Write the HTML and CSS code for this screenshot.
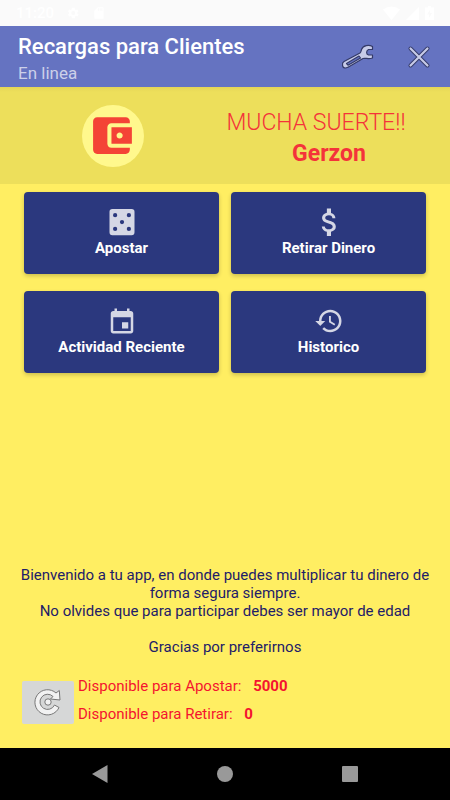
FILE: index.html
```html
<!DOCTYPE html>
<html lang="es">
<head>
    <meta charset="UTF-8">
    <meta name="viewport" content="width=device-width, initial-scale=1.0">
    <title>Recargas para Clientes</title>
    <link rel="stylesheet" href="styles.css">
</head>
<body>
    <div class="status-bar">
        <div class="status-group">
            <span class="status-time">11:20</span>
            <svg width="14" height="14" viewBox="0 0 24 24" fill="currentColor"><path fill-rule="evenodd" d="M19.4 13a7.500 7.500 0 0 0 0-2l2.100-1.600-2-3.500-2.500 1a7.300 7.300 0 0 0-1.700-1L15 3.200h-5l-.4 2.700a7.300 7.300 0 0 0-1.700 1l-2.500-1-2 3.500L5.600 11a7.500 7.500 0 0 0 0 2l-2.100 1.600 2 3.500 2.500-1a7.300 7.300 0 0 0 1.700 1l.4 2.700h5l.4-2.700a7.300 7.300 0 0 0 1.700-1l2.500 1 2-3.500zM12.500 15.500a3.500 3.500 0 1 1 0-7 3.500 3.500 0 0 1 0 7z"/></svg>
            <svg width="14" height="14" viewBox="0 0 24 24" fill="currentColor"><path d="M18 2h-8L4 8v12a2 2 0 0 0 2 2h12a2 2 0 0 0 2-2V4a2 2 0 0 0-2-2zm-6 6h-2V4h2zm3 0h-2V4h2zm3 0h-2V4h2z"/></svg>
        </div>
        <div class="status-group status-right">
            <svg width="17" height="14" viewBox="0 0 17 14" fill="currentColor"><path d="M0 3.500Q8.500-2.500 17 3.500L8.500 14z"/></svg>
            <svg width="13" height="14" viewBox="0 0 13 14" fill="currentColor"><path d="M0 14 13 1v13z"/></svg>
            <svg width="9" height="14" viewBox="0 0 9 14" fill="currentColor"><path fill-rule="evenodd" d="M3 0h3v1.500h3V14H0V1.500h3zM5 4 2 8.500h2V12l3-5H5z"/></svg>
        </div>
    </div>

    <header class="toolbar">
        <div class="toolbar-titles">
            <h1 class="toolbar-title">Recargas para Clientes</h1>
            <p class="toolbar-subtitle">En linea</p>
        </div>
        <button class="toolbar-btn" type="button" aria-label="Ajustes">
            <svg width="34" height="28" viewBox="0 0 34 28">
                <path fill="#c7cbe8" stroke="#343a68" stroke-width="1.200" stroke-linejoin="round" fill-rule="evenodd" d="M31.500 3.500C28 1.500 22 2 20.500 6.500c-.4 1.500-.4 2.800-1.500 3.500L3 18.500c-2.500 1.500-2 6.500 1.500 6.500 1 0 1.500-.3 2.500-.8l15-8.700c2.500-.7 5.500 1 9.500-.5v-3h-4c-2.500-1-2.500-4 0-5.500h4zM5.500 20.500 18 13l1.500 2L7 22.200z"/>
            </svg>
        </button>
        <button class="toolbar-btn" type="button" aria-label="Cerrar">
            <svg width="24" height="24" viewBox="0 0 24 24" fill="none" stroke-linecap="round">
                <path stroke="#343a68" stroke-width="4" d="M3.500 3.500l17 17M20.500 3.500l-17 17"/>
                <path stroke="#c7cbe8" stroke-width="2.200" d="M3.500 3.500l17 17M20.500 3.500l-17 17"/>
            </svg>
        </button>
    </header>

    <section class="hero">
        <div class="hero-logo">
            <svg width="49" height="49" viewBox="1 0 24 24" fill="currentColor"><path d="M21 18v1c0 1.100-.9 2-2 2H5c-1.110 0-2-.9-2-2V5c0-1.100.89-2 2-2h14c1.100 0 2 .9 2 2v1h-9c-1.110 0-2 .9-2 2v8c0 1.100.89 2 2 2h9zm-9-2h10V8H12v8zm4-2.500c-.83 0-1.500-.67-1.500-1.500s.67-1.500 1.500-1.500 1.500.67 1.500 1.500-.67 1.500-1.500 1.500z"/></svg>
        </div>
        <div class="hero-text">
            <p class="hero-greeting">MUCHA SUERTE!!</p>
            <p class="hero-name">Gerzon</p>
        </div>
    </section>

    <main class="content">
        <div class="menu-grid">
            <button class="menu-btn" type="button">
                <svg class="menu-icon" viewBox="0 0 24 24"><path fill-rule="evenodd" d="M4.300 1.500h15.400A2.300 2.300 0 0 1 22 3.800v16.400a2.300 2.300 0 0 1-2.300 2.300H4.300A2.300 2.300 0 0 1 2 20.200V3.800a2.300 2.300 0 0 1 2.300-2.300zM6.500 4.800a1.700 1.700 0 1 0 0 3.400 1.700 1.700 0 0 0 0-3.400zm11 0a1.700 1.700 0 1 0 0 3.400 1.700 1.700 0 0 0 0-3.400zM12 10.300a1.700 1.700 0 1 0 0 3.400 1.700 1.700 0 0 0 0-3.400zM6.500 15.800a1.700 1.700 0 1 0 0 3.400 1.700 1.700 0 0 0 0-3.400zm11 0a1.700 1.700 0 1 0 0 3.400 1.700 1.700 0 0 0 0-3.400z"/></svg>
                Apostar
            </button>
            <button class="menu-btn" type="button">
                <svg class="menu-icon" viewBox="0 0 24 24"><path transform="translate(-.7 -1) scale(1.100)" d="M11.800 10.900c-2.270-.59-3-1.200-3-2.150 0-1.090 1.010-1.850 2.700-1.850 1.780 0 2.440.85 2.500 2.100h2.210c-.07-1.720-1.120-3.300-3.210-3.810V2h-3v3.160c-1.940.42-3.500 1.680-3.500 3.610 0 2.310 1.910 3.460 4.700 4.130 2.500.6 3 1.480 3 2.410 0 .69-.49 1.790-2.700 1.790-2.060 0-2.870-.92-2.980-2.100h-2.200c.12 2.190 1.760 3.420 3.680 3.830V22h3v-3.150c1.950-.37 3.500-1.500 3.500-3.550 0-2.840-2.430-3.810-4.700-4.400z"/></svg>
                Retirar Dinero
            </button>
            <button class="menu-btn" type="button">
                <svg class="menu-icon" viewBox="0 -1 24 24"><path d="M17 12h-5v5h5v-5zM16 1v2H8V1H6v2H5c-1.110 0-1.990.9-1.990 2L3 19c0 1.100.89 2 2 2h14c1.100 0 2-.9 2-2V5c0-1.100-.9-2-2-2h-1V1h-2zm3 18H5V8h14v11z"/></svg>
                Actividad Reciente
            </button>
            <button class="menu-btn" type="button">
                <svg class="menu-icon" viewBox="0 0 24 24"><path d="M13 3c-4.970 0-9 4.030-9 9H1l3.890 3.890.07.14L9 12H6c0-3.870 3.130-7 7-7s7 3.130 7 7-3.130 7-7 7c-1.930 0-3.680-.79-4.940-2.060l-1.420 1.420C8.270 19.990 10.510 21 13 21c4.970 0 9-4.030 9-9s-4.030-9-9-9zm-1 5v5l4.280 2.540.72-1.210-3.500-2.080V8H12z"/></svg>
                Historico
            </button>
        </div>

        <div class="welcome">
            <p>Bienvenido a tu app, en donde puedes multiplicar tu dinero de forma segura siempre.</p>
            <p>No olvides que para participar debes ser mayor de edad</p>
            <p class="welcome-thanks">Gracias por preferirnos</p>
        </div>

        <div class="balance">
            <button class="refresh-btn" type="button" aria-label="Actualizar saldo">
                <svg width="30" height="30" viewBox="0 0 30 30" fill="#f2f2f2" stroke="#777" stroke-width="1" stroke-linejoin="round">
                    <path d="M23 6 26.300 3.500 27 13 17.500 12 20 9.500A7.600 7.600 0 1 0 21.500 18L26 20.500A12.600 12.600 0 1 1 23 6z"/>
                    <circle cx="15" cy="15" r="3.200"/>
                </svg>
            </button>
            <div class="balance-lines">
                <p>Disponible para Apostar: <strong class="balance-value">5000</strong></p>
                <p>Disponible para Retirar: <strong class="balance-value">0</strong></p>
            </div>
        </div>
    </main>

    <nav class="nav-bar">
        <button class="nav-btn" type="button" aria-label="Atrás">
            <svg width="18" height="18" viewBox="0 0 18 18"><path d="M16.500 0v18L1 9z"/></svg>
        </button>
        <button class="nav-btn" type="button" aria-label="Inicio">
            <svg width="18" height="18" viewBox="0 0 18 18"><circle cx="9" cy="9" r="8"/></svg>
        </button>
        <button class="nav-btn" type="button" aria-label="Recientes">
            <svg width="18" height="18" viewBox="0 0 18 18"><rect x="1" y="1" width="16" height="16" rx="1"/></svg>
        </button>
    </nav>
</body>
</html>
```

FILE: styles.css
```css
* {
    box-sizing: border-box;
}

body {
    display: flex;
    flex-direction: column;
    min-height: 100vh;
    margin: 0;
    background: #ffee62;
    font-family: Roboto, sans-serif;
    font-size: 15px;
    line-height: 18px;
}

h1,
p {
    margin: 0;
}

button {
    padding: 0;
    border: none;
    background: transparent;
    font-family: inherit;
    cursor: pointer;
}

svg {
    display: block;
}

/* Barra de estado */
.status-bar {
    display: flex;
    justify-content: space-between;
    align-items: center;
    height: 26px;
    padding: 0 16px;
    background: #fafafa;
    color: #fff;
}

.status-group {
    display: flex;
    align-items: center;
    gap: 12px;
}

.status-right {
    gap: 6px;
}

.status-time {
    font-weight: 500;
}

/* Cabecera */
.toolbar {
    display: flex;
    align-items: center;
    height: 61px;
    padding: 0 1px 0 18px;
    background: #6573c1;
}

.toolbar-titles {
    flex: 1;
    padding-top: 4px;
}

.toolbar-title {
    color: #fff;
    font-size: 22px;
    font-weight: 500;
    line-height: 28px;
}

.toolbar-subtitle {
    color: #ccd0e9;
    font-size: 17px;
    line-height: 24px;
}

.toolbar-btn {
    display: flex;
    align-items: center;
    justify-content: center;
    width: 61px;
    height: 61px;
}

.hero {
    display: grid;
    grid-template-columns: 1fr 1fr;
    align-items: center;
    height: 97px;
    padding: 0 18px 0 44px;
    background: linear-gradient(#e4d556, #eddf5b 5px);
    color: #f4333a;
}

.hero-logo {
    display: flex;
    align-items: center;
    justify-content: center;
    width: 62px;
    height: 62px;
    margin-left: 38px;
    border-radius: 50%;
    background: #fff88d;
    color: #f44336;
}

.hero-text {
    display: flex;
    flex-direction: column;
    align-items: center;
    margin-left: -38px;
    padding-top: 4px;
    font-size: 23px;
    line-height: 31px;
}

.hero-greeting {
    font-weight: 300;
}

.hero-name {
    padding-left: 26px;
    font-weight: 700;
}

.content {
    display: flex;
    flex: 1;
    flex-direction: column;
    padding-top: 8px;
}

/* Menu principal */
.menu-grid {
    display: grid;
    grid-template-columns: 1fr 1fr;
    gap: 17px 12px;
    padding: 0 24px;
}

.menu-btn {
    display: flex;
    flex-direction: column;
    align-items: center;
    justify-content: center;
    gap: 2px;
    height: 82px;
    padding-bottom: 2px;
    border-radius: 4px;
    background: #2b387e;
    box-shadow: 0 2px 4px rgba(0, 0, 0, 0.2);
    color: #fff;
    font-size: 15px;
    font-weight: 700;
    line-height: 18px;
}

.menu-icon {
    width: 32px;
    height: 30px;
    fill: #d5d7e5;
}

.welcome {
    margin-top: auto;
    padding: 0 12px;
    color: #1e2068;
    text-align: center;
}

.welcome-thanks {
    margin-top: 18px;
}

.balance {
    display: flex;
    align-items: center;
    gap: 4px;
    padding: 16px 22px 20px;
    color: #f4142f;
}

.refresh-btn {
    display: flex;
    align-items: center;
    justify-content: center;
    width: 52px;
    height: 43px;
    margin-top: 4px;
    border-radius: 2px;
    background: #d6d7d7;
}

.balance-lines {
    line-height: 28px;
}

.balance-value {
    margin-left: 8px;
}

/* Barra de navegacion */
.nav-bar {
    display: flex;
    align-items: center;
    justify-content: center;
    gap: 64px;
    height: 52px;
    background: #000;
}

.nav-btn {
    display: flex;
    align-items: center;
    justify-content: center;
    width: 61px;
    height: 52px;
    fill: #999;
}
```
